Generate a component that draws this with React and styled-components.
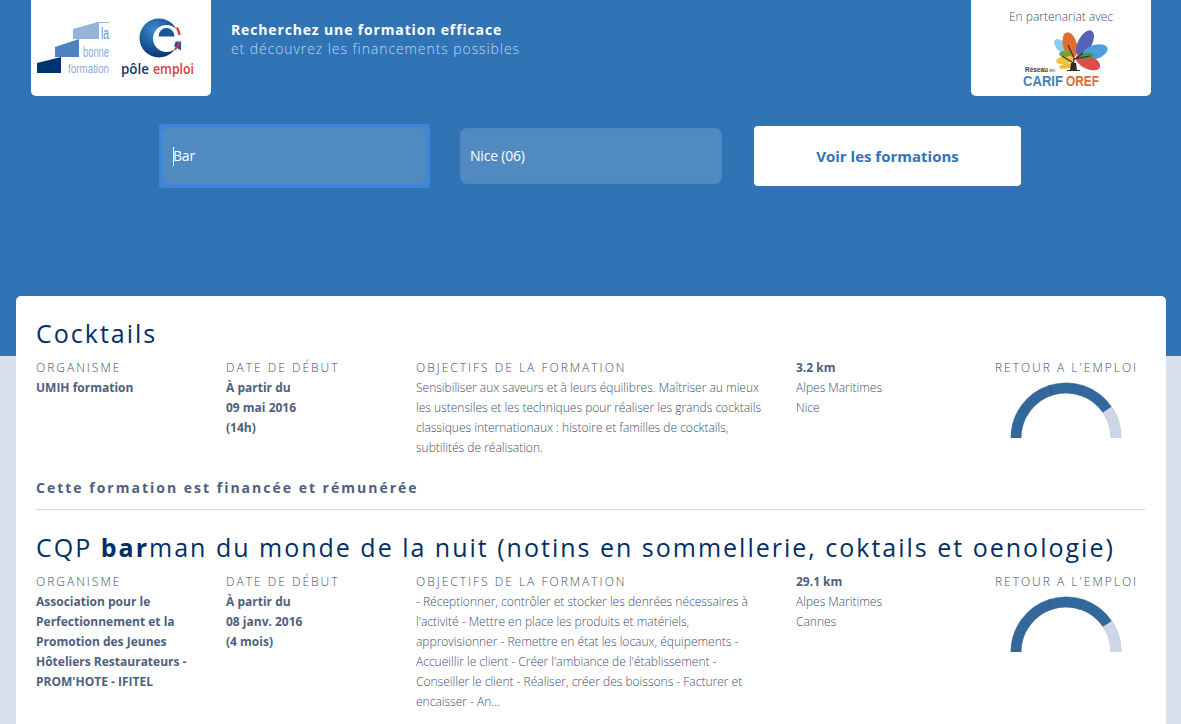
import React from "react";
import styled, { createGlobalStyle } from "styled-components";

const Global = createGlobalStyle`
  html, body {
    margin: 0;
    padding: 0;
    height: 724px;
    overflow: hidden;
    background: #d7e1ed;
    font-family: 'Open Sans', 'Liberation Sans', sans-serif;
  }
  * { box-sizing: border-box; }
`;

const Page = styled.div`
  height: 724px;
  overflow: hidden;
  background: linear-gradient(#3174b6 0, #3174b6 356px, #d7e1ed 356px);
  padding: 0 15px 0 16px;
`;

const Header = styled.header`
  display: flex;
  padding: 0 15px;
  height: 96px;
`;

const LogoCard = styled.div`
  width: 180px;
  height: 96px;
  background: #fff;
  border-radius: 0 0 5px 5px;
  flex: none;
  overflow: hidden;
`;

const Tagline = styled.div`
  flex: 1;
  padding: 20px 0 0 20px;
  font-size: 14px;
  line-height: 19px;
  letter-spacing: 0.92px;
  font-weight: 300;
  color: #bcd9f6;
  strong {
    display: block;
    color: #fff;
    font-weight: 700;
    letter-spacing: 0.85px;
  }
`;

const PartnerCard = styled(LogoCard)`
  padding-top: 9px;
  font-size: 12px;
  line-height: 16px;
  font-weight: 300;
  text-align: center;
  color: #3d4e6e;
`;

const SearchRow = styled.form`
  display: flex;
  align-items: center;
  margin-top: 30px;
  height: 60px;
  padding-left: 147px;
`;

const FocusRing = styled.div`
  flex: none;
  margin: 0 30px 0 -4px;
  padding: 4px;
  border-radius: 3px;
  background: #3f86d8;
`;

const Field = styled.div`
  width: ${(p) => p.$width}px;
  height: 56px;
  flex: none;
  border-radius: 7px;
  background: #518ac1;
  border: 1px solid ${(p) => (p.$focus ? "#518ac1" : "#4a85c4")};
  color: #fff;
  font-size: 14px;
  letter-spacing: -0.2px;
  line-height: 54px;
  padding-left: 9px;
  position: relative;
`;

const PlainField = styled(Field)`
  margin-right: 32px;
`;

const Caret = styled.span`
  position: absolute;
  left: 9px;
  top: 18px;
  width: 1px;
  height: 19px;
  background: #fff;
`;

const SubmitButton = styled.button`
  width: 267px;
  height: 60px;
  border: none;
  border-radius: 4px;
  background: #fff;
  color: #3174b6;
  font-family: inherit;
  font-size: 15px;
  font-weight: 700;
  flex: none;
`;

const Card = styled.main`
  margin-top: 110px;
  background: #fff;
  border-radius: 5px 5px 0 0;
  padding: 0 20px;
  height: 428px;
`;

const Result = styled.article`
  padding-top: 18px;
  border-bottom: ${(p) => (p.$first ? "1px solid #d9d9d9" : "none")};
  padding-bottom: ${(p) => (p.$first ? 11 : 0)}px;
`;

const Title = styled.h2`
  margin: 0;
  font-size: 25px;
  line-height: 38px;
  font-weight: 400;
  letter-spacing: 2px;
  color: #002f66;
  white-space: nowrap;
  b { font-weight: 700; }
`;

const Columns = styled.div`
  display: grid;
  grid-template-columns: 190px 190px 380px 199px 151px;
  margin-top: 8px;
`;

const Column = styled.div`
  font-size: 12px;
  line-height: 20px;
  font-weight: 300;
  color: #3d4e6e;
  padding-right: ${(p) => p.$pad || 0}px;
`;

const PlaceColumn = styled(Column)`
  margin-top: -2px;
`;

const Label = styled.div`
  font-size: 12px;
  line-height: 16px;
  font-weight: 300;
  letter-spacing: 2px;
  color: #3d4e6e;
  margin-bottom: 2px;
  white-space: nowrap;
`;

const Strong = styled.div`
  font-weight: 700;
  color: #4e5f7d;
`;

const GaugeColumn = styled.div`
  display: flex;
  flex-direction: column;
  align-items: center;
  padding-right: 8px;
`;

const GaugeDrawing = styled.svg`
  margin: 4px 2px 0 0;
`;

const Funding = styled.p`
  margin: 20px 0 0;
  font-size: 14px;
  line-height: 20px;
  font-weight: 700;
  letter-spacing: 2px;
  color: #4e5f7d;
`;

function Gauge({ value }) {
  const angle = Math.PI * (1 - value);
  const r = 50;
  const x = 56 + r * Math.cos(angle);
  const y = 56 - r * Math.sin(angle);
  const arc = "M6 56A50 50 0 0 1 106 56";
  const ticks = [36, 72, 108].map((deg) => {
    const a = Math.PI * (1 - deg / 180);
    return `M${56 + 44.7 * Math.cos(a)} ${56 - 44.7 * Math.sin(a)}L${56 + 55.3 * Math.cos(a)} ${56 - 55.3 * Math.sin(a)}`;
  });
  return (
    <GaugeDrawing width="112" height="57" viewBox="0 0 112 57">
      <path d={arc} fill="none" stroke="#c4c4c4" strokeWidth="11" />
      <path d={arc} fill="none" stroke="#cbd7e7" strokeWidth="10.5" />
      <path d={`M6 56A50 50 0 0 1 ${x} ${y}`} fill="none" stroke="#33689d" strokeWidth="10.5" />
      {ticks.map((d) => <path key={d} d={d} stroke="#2a5a8c" strokeWidth="0.8" />)}
    </GaugeDrawing>
  );
}

function BonneLogo() {
  return (
    <svg width="180" height="96" viewBox="0 0 180 96">
      <defs>
        <radialGradient id="globe" cx="0.38" cy="0.3" r="0.8">
          <stop offset="0" stopColor="#3f8bd0" />
          <stop offset="0.55" stopColor="#1a5596" />
          <stop offset="1" stopColor="#0b2c5c" />
        </radialGradient>
      </defs>
      <path d="M6 63L30 57V73H6z" fill="#00336e" />
      <path d="M24 47L48 39V57H24z" fill="#4e82c3" />
      <path d="M42 29L67 22H78V23H68V39H42z" fill="#97b3d8" />
      <text x="70" y="39" fontFamily="'Liberation Sans'" fontSize="16" fill="#5f8fca" textLength="8" lengthAdjust="spacingAndGlyphs">la</text>
      <text x="52" y="57" fontFamily="'Liberation Sans'" fontSize="14" fill="#86add9" textLength="26" lengthAdjust="spacingAndGlyphs">bonne</text>
      <text x="37" y="73" fontFamily="'Liberation Sans'" fontSize="13" fill="#86add9" textLength="41" lengthAdjust="spacingAndGlyphs">formation</text>

      <circle cx="128" cy="38" r="19.5" fill="url(#globe)" />
      <circle cx="135.5" cy="38.5" r="13.5" fill="#fff" />
      <path d="M127.5 36.5a8 8.5 0 0 1 16 0z" fill="#1a5596" />
      <path d="M143 41.5h7v9l-7-4.5a10 10 0 0 0 1.5-4.5z" fill="#1a5596" />
      <path d="M146 27.5A19.5 19.5 0 0 1 148.5 35" fill="none" stroke="#e4322f" strokeWidth="2.2" />
      <path d="M148.5 42A19.5 19.5 0 0 1 144 49.5" fill="none" stroke="#e4322f" strokeWidth="2.2" />

      <text x="90" y="74" fontFamily="'Open Sans'" fontSize="14" fontWeight="600" fill="#13366b" textLength="28" lengthAdjust="spacingAndGlyphs">pôle</text>
      <text x="122" y="74" fontFamily="'Open Sans'" fontSize="14" fontWeight="600" fill="#dc3a3c" textLength="41" lengthAdjust="spacingAndGlyphs">emploi</text>
    </svg>
  );
}

function CarifLogo() {
  return (
    <svg width="180" height="66" viewBox="0 0 180 66">
      <ellipse cx="91" cy="22" rx="5" ry="10" fill="#8fcdf0" transform="rotate(-45 91 22)" />
      <ellipse cx="99" cy="20" rx="7" ry="13" fill="#df6f30" transform="rotate(-15 99 20)" />
      <ellipse cx="114" cy="18" rx="7" ry="14" fill="#5563b4" transform="rotate(28 114 18)" />
      <ellipse cx="124" cy="27" rx="7" ry="13" fill="#4a9edc" transform="rotate(72 124 27)" />
      <ellipse cx="117" cy="37" rx="7" ry="13" fill="#dc4f49" transform="rotate(-65 117 37)" />
      <ellipse cx="94" cy="35" rx="4" ry="9" fill="#f3c33f" transform="rotate(80 94 35)" />
      <ellipse cx="96" cy="41" rx="2.5" ry="8" fill="#f5b93a" transform="rotate(80 96 41)" />
      <ellipse cx="94" cy="29" rx="3" ry="6" fill="#6aa73b" transform="rotate(90 94 29)" />
      <ellipse cx="116" cy="31" rx="3" ry="7" fill="#3f9a54" transform="rotate(80 116 31)" />
      <path d="M102 45L103 33L97 20M103 35L112 28M102.500 38L91 31M103 34L119 31" stroke="#3a2a20" strokeWidth="1.2" fill="none" />
      <path d="M100 38h5l1 7h3v1h-13v-1h3z" fill="#3a2a20" />
      <text x="54" y="47" fontFamily="'Liberation Sans'" fontSize="7" fontWeight="700" fill="#4c3a2d" textLength="23" lengthAdjust="spacingAndGlyphs">Réseau</text>
      <text x="78" y="47" fontFamily="'Liberation Sans'" fontSize="5" fill="#4c3a2d" textLength="6" lengthAdjust="spacingAndGlyphs">des</text>
      <text x="52" y="61" fontFamily="'Liberation Sans'" fontSize="14.500" fontWeight="700" fill="#477fb7" textLength="40" lengthAdjust="spacingAndGlyphs">CARIF</text>
      <text x="95" y="61" fontFamily="'Liberation Sans'" fontSize="14.500" fontWeight="700" fill="#dd6d31" textLength="33" lengthAdjust="spacingAndGlyphs">OREF</text>
    </svg>
  );
}

const results = [
  {
    title: <>Cocktails</>,
    org: "UMIH formation",
    date: ["À partir du", "09 mai 2016", "(14h)"],
    text: "Sensibiliser aux saveurs et à leurs équilibres. Maîtriser au mieux les ustensiles et les techniques pour réaliser les grands cocktails classiques internationaux : histoire et familles de cocktails, subtilités de réalisation.",
    km: "3.2 km",
    city: "Nice",
    score: 0.808,
    funding: "Cette formation est financée et rémunérée",
  },
  {
    title: <>CQP <b>bar</b>man du monde de la nuit (notins en sommellerie, coktails et oenologie)</>,
    org: "Association pour le Perfectionnement et la Promotion des Jeunes Hôteliers Restaurateurs - PROM'HOTE - IFITEL",
    date: ["À partir du", "08 janv. 2016", "(4 mois)"],
    text: "- Réceptionner, contrôler et stocker les denrées nécessaires à l'activité - Mettre en place les produits et matériels, approvisionner - Remettre en état les locaux, équipements - Accueillir le client - Créer l'ambiance de l'établissement - Conseiller le client - Réaliser, créer des boissons - Facturer et encaisser - An...",
    km: "29.1 km",
    city: "Cannes",
    score: 0.81,
  },
];

export default function App() {
  return (
    <Page>
      <Global />
      <Header>
        <LogoCard>
          <BonneLogo />
        </LogoCard>
        <Tagline>
          <strong>Recherchez une formation efficace</strong>
          et découvrez les financements possibles
        </Tagline>
        <PartnerCard>
          En partenariat avec
          <CarifLogo />
        </PartnerCard>
      </Header>
      <SearchRow>
        <FocusRing>
          <Field $focus $width={263}>
            <Caret />
            Bar
          </Field>
        </FocusRing>
        <PlainField $width={262}>Nice (06)</PlainField>
        <SubmitButton type="button">Voir les formations</SubmitButton>
      </SearchRow>
      <Card>
        {results.map((r, i) => (
          <Result key={i} $first={i === 0}>
            <Title>{r.title}</Title>
            <Columns>
              <Column $pad={20}>
                <Label>ORGANISME</Label>
                <Strong>{r.org}</Strong>
              </Column>
              <Column>
                <Label>DATE DE DÉBUT</Label>
                {r.date.map((d) => <Strong key={d}>{d}</Strong>)}
              </Column>
              <Column $pad={30}>
                <Label>OBJECTIFS DE LA FORMATION</Label>
                {r.text}
              </Column>
              <PlaceColumn>
                <Strong>{r.km}</Strong>
                <div>Alpes Maritimes</div>
                <div>{r.city}</div>
              </PlaceColumn>
              <GaugeColumn>
                <Label>RETOUR A L'EMPLOI</Label>
                <Gauge value={r.score} />
              </GaugeColumn>
            </Columns>
            {r.funding && <Funding>{r.funding}</Funding>}
          </Result>
        ))}
      </Card>
    </Page>
  );
}
